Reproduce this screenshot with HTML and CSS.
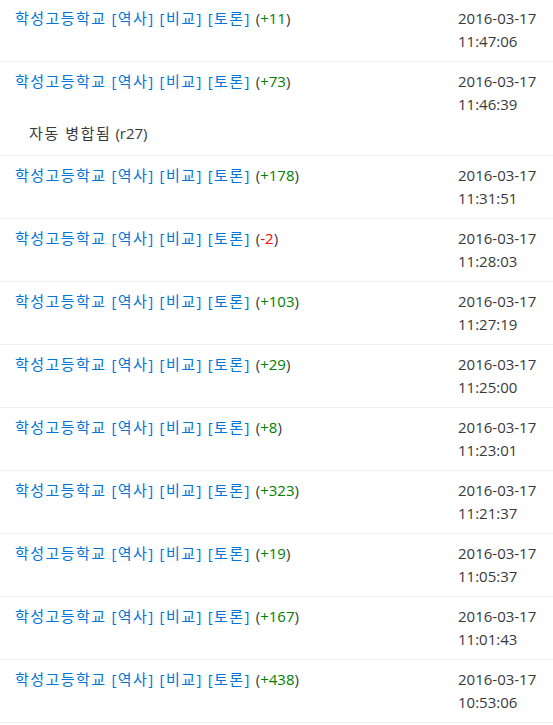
FILE: index.html
```html
<!DOCTYPE html>
<html lang="ko">
<head>
    <meta charset="UTF-8">
    <title>역사</title>
    <link rel="stylesheet" href="styles.css">
</head>
<body>
    <table class="history">
        <tbody>
            <tr>
                <td class="title"><a href="#">학성고등학교</a> <a href="#">[역사]</a> <a href="#">[비교]</a> <a href="#">[토론]</a> (<span class="plus">+11</span>)</td>
                <td class="date">2016-03-17<br>11:47:06</td>
            </tr>
            <tr class="has-note">
                <td class="title"><a href="#">학성고등학교</a> <a href="#">[역사]</a> <a href="#">[비교]</a> <a href="#">[토론]</a> (<span class="plus">+73</span>)</td>
                <td class="date">2016-03-17<br>11:46:39</td>
            </tr>
            <tr class="note">
                <td colspan="2"><span class="ko">자동 병합됨</span> (r27)</td>
            </tr>
            <tr>
                <td class="title"><a href="#">학성고등학교</a> <a href="#">[역사]</a> <a href="#">[비교]</a> <a href="#">[토론]</a> (<span class="plus">+178</span>)</td>
                <td class="date">2016-03-17<br>11:31:51</td>
            </tr>
            <tr>
                <td class="title"><a href="#">학성고등학교</a> <a href="#">[역사]</a> <a href="#">[비교]</a> <a href="#">[토론]</a> (<span class="minus">-2</span>)</td>
                <td class="date">2016-03-17<br>11:28:03</td>
            </tr>
            <tr>
                <td class="title"><a href="#">학성고등학교</a> <a href="#">[역사]</a> <a href="#">[비교]</a> <a href="#">[토론]</a> (<span class="plus">+103</span>)</td>
                <td class="date">2016-03-17<br>11:27:19</td>
            </tr>
            <tr>
                <td class="title"><a href="#">학성고등학교</a> <a href="#">[역사]</a> <a href="#">[비교]</a> <a href="#">[토론]</a> (<span class="plus">+29</span>)</td>
                <td class="date">2016-03-17<br>11:25:00</td>
            </tr>
            <tr>
                <td class="title"><a href="#">학성고등학교</a> <a href="#">[역사]</a> <a href="#">[비교]</a> <a href="#">[토론]</a> (<span class="plus">+8</span>)</td>
                <td class="date">2016-03-17<br>11:23:01</td>
            </tr>
            <tr>
                <td class="title"><a href="#">학성고등학교</a> <a href="#">[역사]</a> <a href="#">[비교]</a> <a href="#">[토론]</a> (<span class="plus">+323</span>)</td>
                <td class="date">2016-03-17<br>11:21:37</td>
            </tr>
            <tr>
                <td class="title"><a href="#">학성고등학교</a> <a href="#">[역사]</a> <a href="#">[비교]</a> <a href="#">[토론]</a> (<span class="plus">+19</span>)</td>
                <td class="date">2016-03-17<br>11:05:37</td>
            </tr>
            <tr>
                <td class="title"><a href="#">학성고등학교</a> <a href="#">[역사]</a> <a href="#">[비교]</a> <a href="#">[토론]</a> (<span class="plus">+167</span>)</td>
                <td class="date">2016-03-17<br>11:01:43</td>
            </tr>
            <tr>
                <td class="title"><a href="#">학성고등학교</a> <a href="#">[역사]</a> <a href="#">[비교]</a> <a href="#">[토론]</a> (<span class="plus">+438</span>)</td>
                <td class="date">2016-03-17<br>10:53:06</td>
            </tr>
        </tbody>
    </table>
</body>
</html>
```

FILE: styles.css
```css
body{
    margin: 0;
    background-color: white;
    color: #373a3c;
    font-family: "Open Sans", "Noto Sans CJK KR", sans-serif;
    font-size: 15px;
    line-height: 23px;
}
a{
    color: #0275d8;
    text-decoration: none;
}
.history{
    width: 100%;
    border-collapse: collapse;
    margin-top: -1px;
}
.history td{
    padding: 8px 13px 8px 15px;
    border-bottom: 1px solid #eceeef;
    vertical-align: top;
}
.history td.title a{
    letter-spacing: 1.45px;
}
.history td.title{
    word-spacing: 1px;
}
.history td.date{
    width: 82px;
    padding-left: 0;
    white-space: nowrap;
}
.history tr.has-note td{
    padding-bottom: 0;
    border-bottom: none;
}
.history tr.note td{
    padding: 6px 15px 10px 29px;
}
.ko{
    letter-spacing: 1.6px;
}
.plus{
    color: green;
}
.minus{
    color: red;
}
```
